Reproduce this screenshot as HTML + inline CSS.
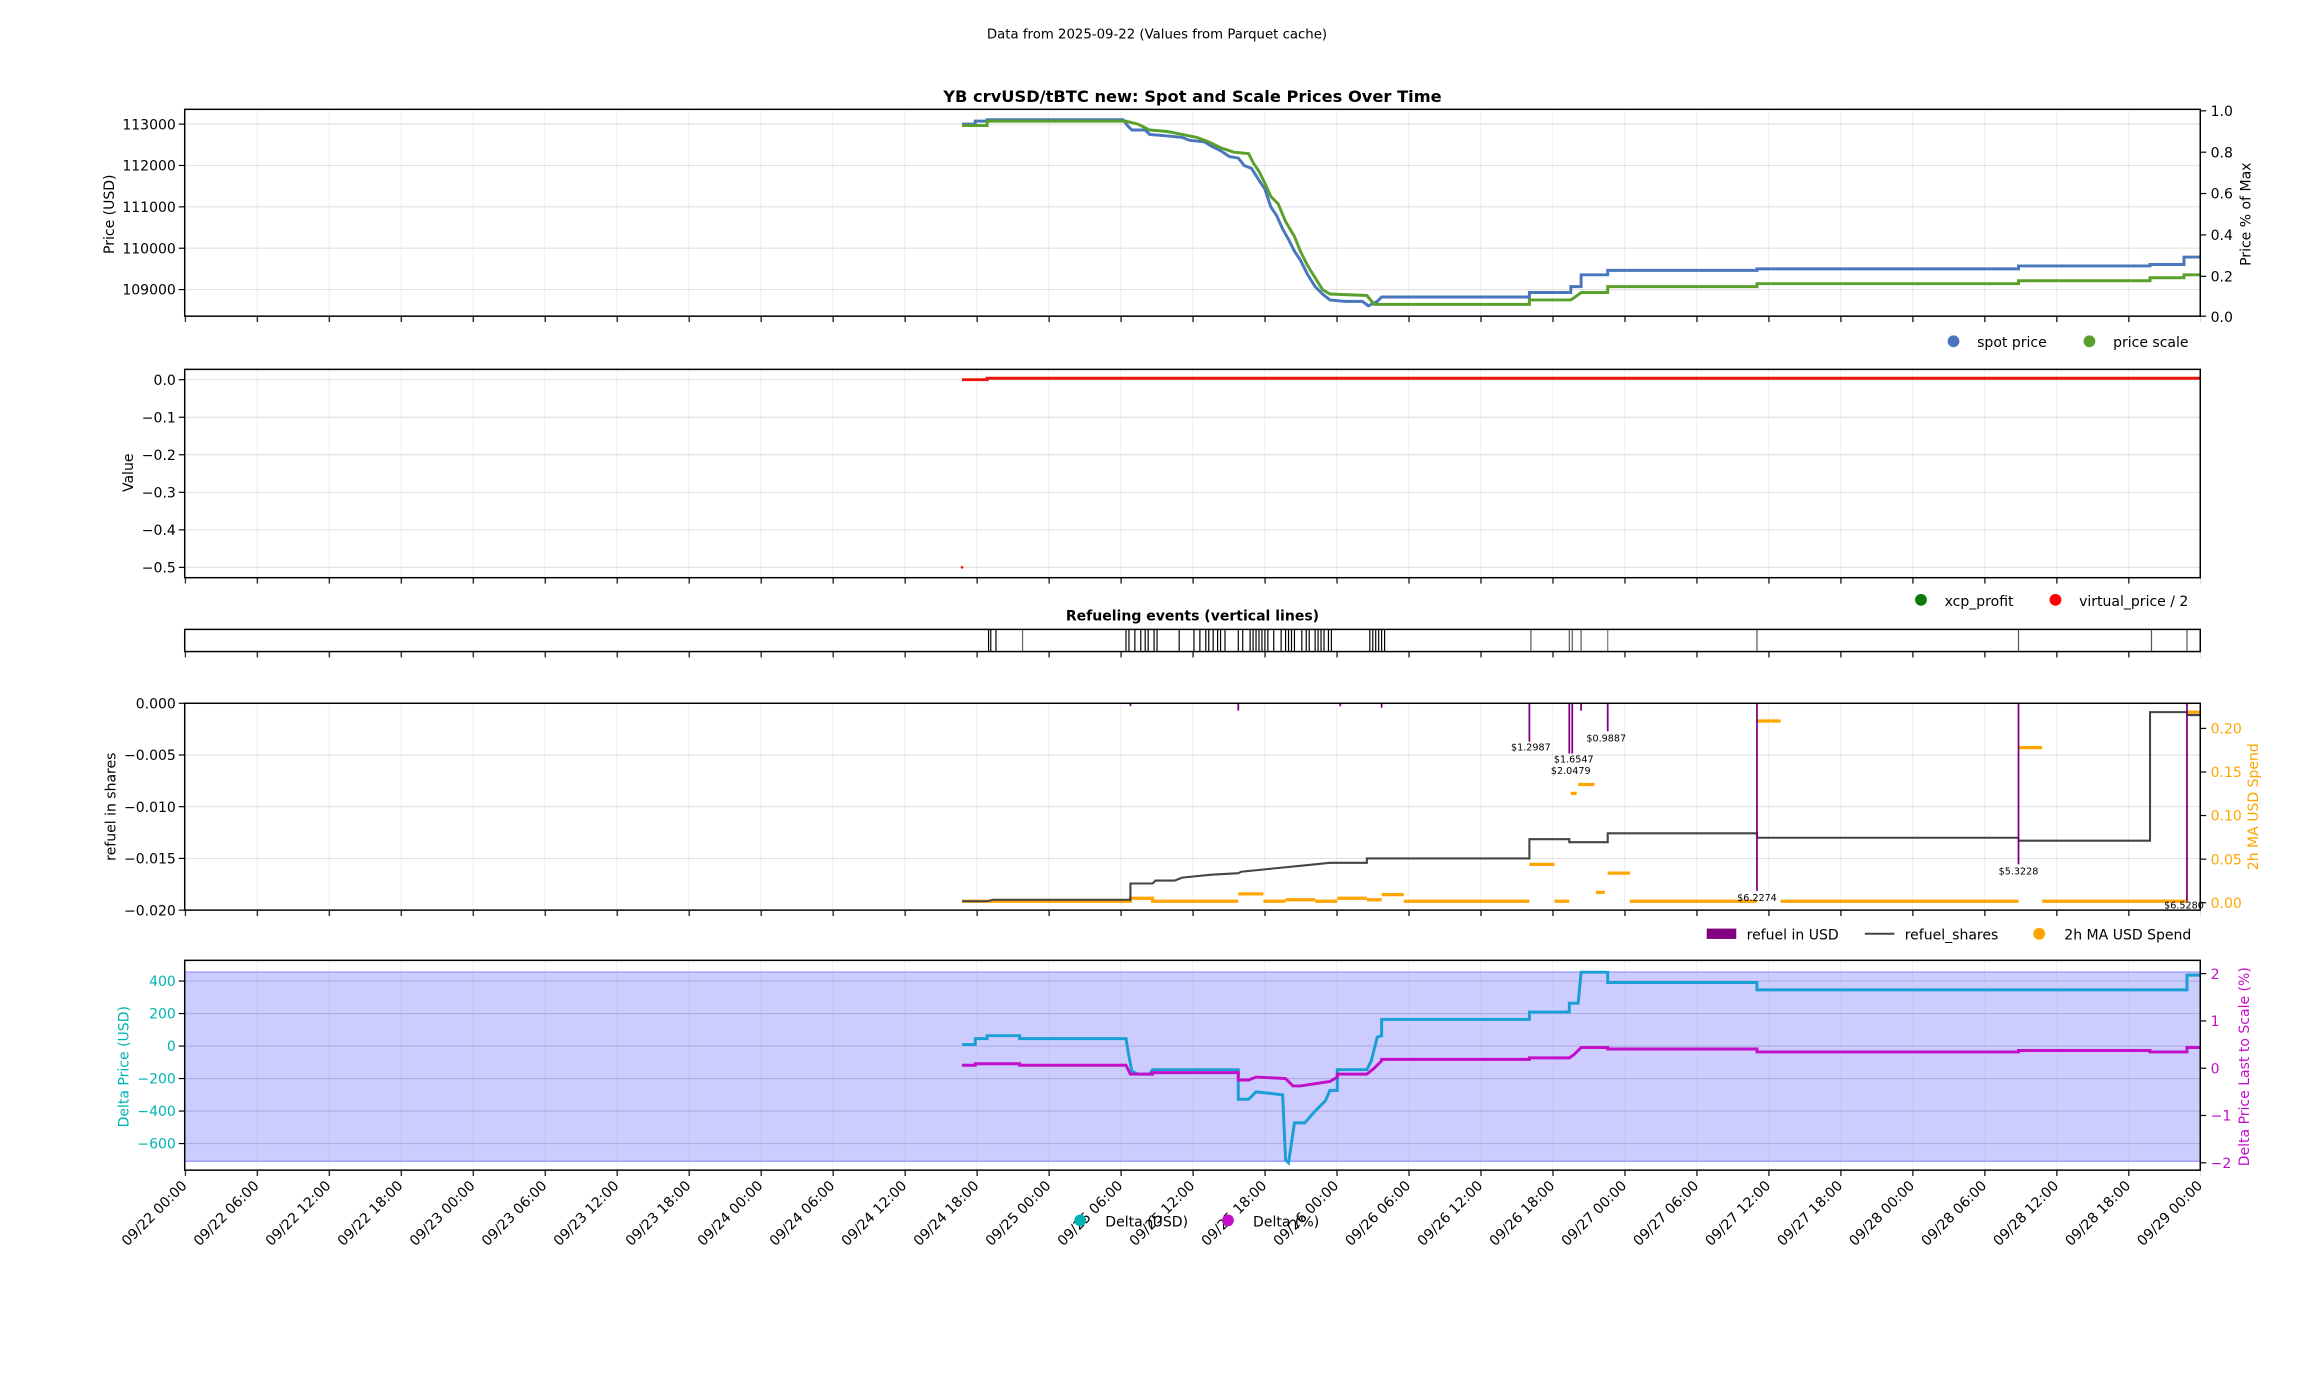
<!DOCTYPE html>
<html><head><meta charset="utf-8"><style>
html,body{margin:0;padding:0;background:#fff;}
svg{display:block;}
text{font-family:"DejaVu Sans","Liberation Sans",sans-serif;}
</style></head><body>
<svg width="2317" height="1377" viewBox="0 0 1568 932" preserveAspectRatio="none" xmlns="http://www.w3.org/2000/svg">
<defs>
<pattern id="vg" x="125" y="0" width="48.714" height="10" patternUnits="userSpaceOnUse"><line x1="0" y1="0" x2="0" y2="10" stroke="#b0b0b0" stroke-opacity="0.35" stroke-width="0.8"/></pattern>
<pattern id="tk" x="125" y="0" width="48.714" height="10" patternUnits="userSpaceOnUse"><line x1="0.4" y1="0" x2="0.4" y2="10" stroke="#000" stroke-width="0.8"/></pattern>
</defs>
<rect width="1568" height="932" fill="#fff"/>
<text x="783" y="26" font-size="9" text-anchor="middle">Data from 2025-09-22 (Values from Parquet cache)</text>
<text x="807" y="69" font-size="11" font-weight="bold" text-anchor="middle">YB crvUSD/tBTC new: Spot and Scale Prices Over Time</text>

<!-- AX1 -->
<rect x="125" y="74" width="1364" height="140" fill="url(#vg)"/>
<g stroke="#b0b0b0" stroke-opacity="0.35" stroke-width="0.8">
<line x1="125" x2="1489" y1="84" y2="84"/><line x1="125" x2="1489" y1="112" y2="112"/><line x1="125" x2="1489" y1="140" y2="140"/><line x1="125" x2="1489" y1="168" y2="168"/><line x1="125" x2="1489" y1="196" y2="196"/>
</g>
<polyline fill="none" stroke="#4a76bd" stroke-width="2" points="651,84 660,84 660,82 668,82 668,81 760,81 763,85 766,88 775,88 778,91 790,92 800,93 805,95 815,96 820,99 826,102 832,106 838,107 842,112 847,114 852,122 856,128 860,140 864,146 868,155 872,162 876,170 880,176 885,186 890,194 895,199 900,203 910,204 922,204 926,207 932,204 935,201 1035,201 1035,198 1063,198 1063,194 1070,194 1070,186 1088,186 1088,183 1189,183 1189,182 1366,182 1366,180 1455,180 1455,179 1478,179 1478,174 1489,174"/>
<polyline fill="none" stroke="#5aa02c" stroke-width="2" points="651,85 668,85 668,82 762,82 770,84 778,88 790,89 800,91 810,93 818,96 826,100 835,103 845,104 848,110 852,116 856,124 860,133 865,138 870,150 876,160 880,170 885,180 890,188 895,196 900,199 925,200 930,206 1035,206 1035,203 1063,203 1066,201 1070,198 1088,198 1088,194 1189,194 1189,192 1366,192 1366,190 1455,190 1455,188 1478,188 1478,186 1489,186"/>
<rect x="125" y="74" width="1364" height="140" fill="none" stroke="#000" stroke-width="1"/>
<rect x="125" y="214" width="1364" height="4" fill="url(#tk)"/>
<g font-size="9.5" text-anchor="end">
<text x="119" y="87.5">113000</text><text x="119" y="115.5">112000</text><text x="119" y="143.5">111000</text><text x="119" y="171.5">110000</text><text x="119" y="199.5">109000</text>
</g>
<g stroke="#000" stroke-width="0.8"><line x1="121" x2="125" y1="84" y2="84"/><line x1="121" x2="125" y1="112" y2="112"/><line x1="121" x2="125" y1="140" y2="140"/><line x1="121" x2="125" y1="168" y2="168"/><line x1="121" x2="125" y1="196" y2="196"/>
<line x1="1489" x2="1493" y1="75" y2="75"/><line x1="1489" x2="1493" y1="103" y2="103"/><line x1="1489" x2="1493" y1="131" y2="131"/><line x1="1489" x2="1493" y1="159" y2="159"/><line x1="1489" x2="1493" y1="187" y2="187"/><line x1="1489" x2="1493" y1="214" y2="214"/></g>
<g font-size="9.5"><text x="1496" y="78.5">1.0</text><text x="1496" y="106.5">0.8</text><text x="1496" y="134.5">0.6</text><text x="1496" y="162.5">0.4</text><text x="1496" y="190.5">0.2</text><text x="1496" y="218">0.0</text></g>
<text transform="translate(77,145) rotate(-90)" font-size="9.5" text-anchor="middle">Price (USD)</text>
<text transform="translate(1523,145) rotate(-90)" font-size="9.5" text-anchor="middle">Price % of Max</text>
<circle cx="1322" cy="231" r="4" fill="#4a76bd"/><text x="1338" y="235" font-size="9.5">spot price</text>
<circle cx="1414" cy="231" r="4" fill="#5aa02c"/><text x="1430" y="235" font-size="9.5">price scale</text>

<!-- AX2 -->
<rect x="125" y="250" width="1364" height="141" fill="url(#vg)"/>
<g stroke="#b0b0b0" stroke-opacity="0.35" stroke-width="0.8">
<line x1="125" x2="1489" y1="257" y2="257"/><line x1="125" x2="1489" y1="282.4" y2="282.4"/><line x1="125" x2="1489" y1="307.8" y2="307.8"/><line x1="125" x2="1489" y1="333.2" y2="333.2"/><line x1="125" x2="1489" y1="358.6" y2="358.6"/><line x1="125" x2="1489" y1="384" y2="384"/>
</g>
<polyline fill="none" stroke="#e8170c" stroke-width="2" points="651,257 668,257 668,256 1489,256"/>
<circle cx="651" cy="384" r="0.9" fill="#e8170c"/>
<rect x="125" y="250" width="1364" height="141" fill="none" stroke="#000" stroke-width="1"/>
<rect x="125" y="391" width="1364" height="4" fill="url(#tk)"/>
<g stroke="#000" stroke-width="0.8"><line x1="121" x2="125" y1="257" y2="257"/><line x1="121" x2="125" y1="282.4" y2="282.4"/><line x1="121" x2="125" y1="307.8" y2="307.8"/><line x1="121" x2="125" y1="333.2" y2="333.2"/><line x1="121" x2="125" y1="358.6" y2="358.6"/><line x1="121" x2="125" y1="384" y2="384"/></g>
<g font-size="9.5" text-anchor="end"><text x="119" y="260.5">0.0</text><text x="119" y="286">−0.1</text><text x="119" y="311.3">−0.2</text><text x="119" y="336.7">−0.3</text><text x="119" y="362">−0.4</text><text x="119" y="387.5">−0.5</text></g>
<text transform="translate(90,320) rotate(-90)" font-size="9.5" text-anchor="middle">Value</text>
<circle cx="1300" cy="406" r="4" fill="#0a7a0a"/><text x="1316" y="410" font-size="9.5">xcp_profit</text>
<circle cx="1391" cy="406" r="4" fill="#ff0000"/><text x="1407" y="410" font-size="9.5">virtual_price / 2</text>

<!-- AX3 refuel bar -->
<text x="807" y="420" font-size="9.5" font-weight="bold" text-anchor="middle">Refueling events (vertical lines)</text>
<g stroke="#000" stroke-width="0.8">
<line x1="669" x2="669" y1="426" y2="441"/><line x1="670.5" x2="670.5" y1="426" y2="441"/><line x1="674" x2="674" y1="426" y2="441"/><line x1="692" x2="692" y1="426" y2="441" stroke="#666"/>
<line x1="762" x2="762" y1="426" y2="441"/><line x1="764" x2="764" y1="426" y2="441"/><line x1="768" x2="768" y1="426" y2="441"/><line x1="772" x2="772" y1="426" y2="441"/><line x1="775" x2="775" y1="426" y2="441"/><line x1="777" x2="777" y1="426" y2="441"/><line x1="781" x2="781" y1="426" y2="441"/><line x1="783" x2="783" y1="426" y2="441"/>
<line x1="798" x2="798" y1="426" y2="441"/><line x1="808" x2="808" y1="426" y2="441"/><line x1="812" x2="812" y1="426" y2="441"/><line x1="816" x2="816" y1="426" y2="441"/><line x1="818" x2="818" y1="426" y2="441"/><line x1="821" x2="821" y1="426" y2="441"/><line x1="824" x2="824" y1="426" y2="441"/><line x1="826" x2="826" y1="426" y2="441"/><line x1="829" x2="829" y1="426" y2="441"/>
<line x1="838" x2="838" y1="426" y2="441"/><line x1="841" x2="841" y1="426" y2="441"/><line x1="846" x2="846" y1="426" y2="441"/><line x1="848" x2="848" y1="426" y2="441"/><line x1="850" x2="850" y1="426" y2="441"/><line x1="852" x2="852" y1="426" y2="441"/><line x1="854" x2="854" y1="426" y2="441"/><line x1="856" x2="856" y1="426" y2="441"/><line x1="858" x2="858" y1="426" y2="441"/><line x1="862" x2="862" y1="426" y2="441"/><line x1="867" x2="867" y1="426" y2="441"/><line x1="870" x2="870" y1="426" y2="441"/><line x1="872" x2="872" y1="426" y2="441"/><line x1="874" x2="874" y1="426" y2="441"/><line x1="876" x2="876" y1="426" y2="441"/><line x1="881" x2="881" y1="426" y2="441"/><line x1="884" x2="884" y1="426" y2="441"/><line x1="886" x2="886" y1="426" y2="441"/><line x1="890" x2="890" y1="426" y2="441"/><line x1="892" x2="892" y1="426" y2="441"/><line x1="894" x2="894" y1="426" y2="441"/><line x1="896" x2="896" y1="426" y2="441"/><line x1="899" x2="899" y1="426" y2="441"/><line x1="901" x2="901" y1="426" y2="441"/>
<line x1="927" x2="927" y1="426" y2="441"/><line x1="929" x2="929" y1="426" y2="441"/><line x1="931" x2="931" y1="426" y2="441"/><line x1="933" x2="933" y1="426" y2="441"/><line x1="935" x2="935" y1="426" y2="441"/><line x1="937" x2="937" y1="426" y2="441"/>
<line x1="1036" x2="1036" y1="426" y2="441" stroke="#555"/><line x1="1062" x2="1062" y1="426" y2="441" stroke="#555"/><line x1="1064" x2="1064" y1="426" y2="441" stroke="#555"/><line x1="1070" x2="1070" y1="426" y2="441" stroke="#555"/><line x1="1088" x2="1088" y1="426" y2="441" stroke="#777"/>
<line x1="1189" x2="1189" y1="426" y2="441" stroke="#555"/><line x1="1366" x2="1366" y1="426" y2="441" stroke="#555"/><line x1="1456" x2="1456" y1="426" y2="441" stroke="#555"/><line x1="1480" x2="1480" y1="426" y2="441" stroke="#555"/>
</g>
<rect x="125" y="426" width="1364" height="15" fill="none" stroke="#000" stroke-width="1"/>
<rect x="125" y="441" width="1364" height="4" fill="url(#tk)"/>

<!-- AX4 -->
<rect x="125" y="476" width="1364" height="140" fill="url(#vg)"/>
<g stroke="#b0b0b0" stroke-opacity="0.35" stroke-width="0.8">
<line x1="125" x2="1489" y1="511" y2="511"/><line x1="125" x2="1489" y1="546" y2="546"/><line x1="125" x2="1489" y1="581" y2="581"/>
</g>
<polyline fill="none" stroke="#ffa500" stroke-width="2.2" points="651,610 765,610 765,608 780,608 780,610 838,610"/>
<g stroke="#ffa500" stroke-width="2.2">
<line x1="838" x2="855" y1="605" y2="605"/><line x1="855" x2="870" y1="610" y2="610"/><line x1="870" x2="890" y1="609" y2="609"/><line x1="890" x2="905" y1="610" y2="610"/><line x1="905" x2="925" y1="608" y2="608"/><line x1="925" x2="935" y1="609" y2="609"/><line x1="935" x2="950" y1="605.5" y2="605.5"/><line x1="950" x2="1035" y1="610" y2="610"/>
<line x1="1035" x2="1052" y1="585" y2="585"/><line x1="1052" x2="1062" y1="610" y2="610"/><line x1="1063" x2="1067" y1="537" y2="537"/><line x1="1068" x2="1079" y1="531" y2="531"/><line x1="1080" x2="1086" y1="604" y2="604"/><line x1="1088" x2="1103" y1="591" y2="591"/><line x1="1103" x2="1189" y1="610" y2="610"/>
<line x1="1189" x2="1205" y1="488" y2="488"/><line x1="1205" x2="1366" y1="610" y2="610"/><line x1="1366" x2="1382" y1="506" y2="506"/><line x1="1382" x2="1480" y1="610" y2="610"/><line x1="1480" x2="1489" y1="482" y2="482"/>
</g>
<polyline fill="none" stroke="#444" stroke-width="1.4" points="651,610 668,610 672,609 765,609 765,598 780,598 782,596 795,596 800,594 810,593 820,592 838,591 840,590 850,589 860,588 870,587 880,586 890,585 900,584 925,584 925,581 1035,581 1035,568 1062,568 1062,570 1088,570 1088,564 1189,564 1189,567 1366,567 1366,569 1455,569 1455,482 1480,482 1480,484 1489,484"/>
<g stroke="#800080" stroke-width="1.2">
<line x1="765" x2="765" y1="476" y2="478"/><line x1="838" x2="838" y1="476" y2="481"/><line x1="907" x2="907" y1="476" y2="478"/><line x1="935" x2="935" y1="476" y2="479"/>
<line x1="1035" x2="1035" y1="476" y2="502"/><line x1="1062" x2="1062" y1="476" y2="510"/><line x1="1064" x2="1064" y1="476" y2="510"/><line x1="1070" x2="1070" y1="476" y2="481"/><line x1="1088" x2="1088" y1="476" y2="495"/><line x1="1189" x2="1189" y1="476" y2="603"/><line x1="1366" x2="1366" y1="476" y2="585"/><line x1="1480" x2="1480" y1="476" y2="610"/>
</g>
<g font-size="6.5" text-anchor="middle"><text x="1036" y="508">$1.2987</text><text x="1065" y="516">$1.6547</text><text x="1063" y="524">$2.0479</text><text x="1087" y="502">$0.9887</text><text x="1189" y="610">$6.2274</text><text x="1366" y="592">$5.3228</text><text x="1478" y="615">$6.5280</text></g>
<rect x="125" y="476" width="1364" height="140" fill="none" stroke="#000" stroke-width="1"/>
<rect x="125" y="616" width="1364" height="4" fill="url(#tk)"/>
<g stroke="#000" stroke-width="0.8"><line x1="121" x2="125" y1="476" y2="476"/><line x1="121" x2="125" y1="511" y2="511"/><line x1="121" x2="125" y1="546" y2="546"/><line x1="121" x2="125" y1="581" y2="581"/><line x1="121" x2="125" y1="616" y2="616"/>
<line x1="1489" x2="1493" y1="493" y2="493"/><line x1="1489" x2="1493" y1="522.5" y2="522.5"/><line x1="1489" x2="1493" y1="552" y2="552"/><line x1="1489" x2="1493" y1="581.5" y2="581.5"/><line x1="1489" x2="1493" y1="611" y2="611"/></g>
<g font-size="9.5" text-anchor="end"><text x="119" y="479.5">0.000</text><text x="119" y="514.5">−0.005</text><text x="119" y="549.5">−0.010</text><text x="119" y="584.5">−0.015</text><text x="119" y="619.5">−0.020</text></g>
<g font-size="9.5" fill="#ffa500"><text x="1496" y="496.5">0.20</text><text x="1496" y="526">0.15</text><text x="1496" y="555.5">0.10</text><text x="1496" y="585">0.05</text><text x="1496" y="614.5">0.00</text></g>
<text transform="translate(78,546) rotate(-90)" font-size="9.5" text-anchor="middle">refuel in shares</text>
<text transform="translate(1528,546) rotate(-90)" font-size="9.5" fill="#ffa500" text-anchor="middle">2h MA USD Spend</text>
<rect x="1155" y="628.5" width="20" height="7" fill="#800080"/><text x="1182" y="636" font-size="9.5">refuel in USD</text>
<line x1="1262" x2="1282" y1="632" y2="632" stroke="#444" stroke-width="1.4"/><text x="1289" y="636" font-size="9.5">refuel_shares</text>
<circle cx="1380" cy="632" r="4" fill="#ffa500"/><text x="1397" y="636" font-size="9.5">2h MA USD Spend</text>

<!-- AX5 -->
<rect x="125" y="658" width="1364" height="128" fill="#ccccff"/>
<rect x="125" y="650" width="1364" height="142" fill="url(#vg)"/>
<g stroke="#9090c0" stroke-opacity="0.5" stroke-width="0.8">
<line x1="125" x2="1489" y1="664" y2="664"/><line x1="125" x2="1489" y1="686" y2="686"/><line x1="125" x2="1489" y1="708" y2="708"/><line x1="125" x2="1489" y1="730" y2="730"/><line x1="125" x2="1489" y1="752" y2="752"/><line x1="125" x2="1489" y1="774" y2="774"/>
</g>
<line x1="125" x2="1489" y1="658" y2="658" stroke="#a0a0ff" stroke-width="1"/><line x1="125" x2="1489" y1="786" y2="786" stroke="#a0a0ff" stroke-width="1"/>
<polyline fill="none" stroke="#1a9fd4" stroke-width="2" points="651,707 660,707 660,703 668,703 668,701 690,701 690,703 762,703 764,715 766,725 770,727 778,727 780,724 838,724 838,744 845,744 850,739 868,741 870,785 872,787 876,760 883,760 890,752 897,745 900,738 905,738 905,724 925,724 928,718 932,702 935,701 935,690 1035,690 1035,685 1062,685 1062,679 1068,679 1070,658 1088,658 1088,665 1189,665 1189,670 1480,670 1480,660 1489,660"/>
<polyline fill="none" stroke="#c20fc8" stroke-width="2" points="651,721 660,721 660,720 690,720 690,721 762,721 765,727 780,727 780,726 838,726 838,731 845,731 850,729 870,730 875,735 880,735 900,732 905,729 905,727 925,727 930,723 935,718 935,717 1035,717 1035,716 1062,716 1065,714 1070,709 1088,709 1088,710 1189,710 1189,712 1366,712 1366,711 1455,711 1455,712 1480,712 1480,709 1489,709"/>
<rect x="125" y="650" width="1364" height="142" fill="none" stroke="#000" stroke-width="1"/>
<rect x="125" y="792" width="1364" height="4" fill="url(#tk)"/>
<g stroke="#000" stroke-width="0.8"><line x1="121" x2="125" y1="664" y2="664"/><line x1="121" x2="125" y1="686" y2="686"/><line x1="121" x2="125" y1="708" y2="708"/><line x1="121" x2="125" y1="730" y2="730"/><line x1="121" x2="125" y1="752" y2="752"/><line x1="121" x2="125" y1="774" y2="774"/>
<line x1="1489" x2="1493" y1="659" y2="659"/><line x1="1489" x2="1493" y1="691" y2="691"/><line x1="1489" x2="1493" y1="723" y2="723"/><line x1="1489" x2="1493" y1="755" y2="755"/><line x1="1489" x2="1493" y1="787" y2="787"/></g>
<g font-size="9.5" text-anchor="end" fill="#00b3b3"><text x="119" y="667.5">400</text><text x="119" y="689.5">200</text><text x="119" y="711.5">0</text><text x="119" y="733.5">−200</text><text x="119" y="755.5">−400</text><text x="119" y="777.5">−600</text></g>
<g font-size="9.5" fill="#c20fc8"><text x="1496" y="662.5">2</text><text x="1496" y="694.5">1</text><text x="1496" y="726.5">0</text><text x="1496" y="758.5">−1</text><text x="1496" y="790.5">−2</text></g>
<text transform="translate(87,722) rotate(-90)" font-size="9.5" fill="#00b3b3" text-anchor="middle">Delta Price (USD)</text>
<text transform="translate(1522,722) rotate(-90)" font-size="9.5" fill="#c20fc8" text-anchor="middle">Delta Price Last to Scale (%)</text>

<!-- x tick labels -->
<g font-size="9.5" text-anchor="end">
<text transform="translate(127,803) rotate(-45)">09/22 00:00</text>
<text transform="translate(175.7,803) rotate(-45)">09/22 06:00</text>
<text transform="translate(224.4,803) rotate(-45)">09/22 12:00</text>
<text transform="translate(273.1,803) rotate(-45)">09/22 18:00</text>
<text transform="translate(321.9,803) rotate(-45)">09/23 00:00</text>
<text transform="translate(370.6,803) rotate(-45)">09/23 06:00</text>
<text transform="translate(419.3,803) rotate(-45)">09/23 12:00</text>
<text transform="translate(468,803) rotate(-45)">09/23 18:00</text>
<text transform="translate(516.7,803) rotate(-45)">09/24 00:00</text>
<text transform="translate(565.4,803) rotate(-45)">09/24 06:00</text>
<text transform="translate(614.1,803) rotate(-45)">09/24 12:00</text>
<text transform="translate(662.9,803) rotate(-45)">09/24 18:00</text>
<text transform="translate(711.6,803) rotate(-45)">09/25 00:00</text>
<text transform="translate(760.3,803) rotate(-45)">09/25 06:00</text>
<text transform="translate(809,803) rotate(-45)">09/25 12:00</text>
<text transform="translate(857.7,803) rotate(-45)">09/25 18:00</text>
<text transform="translate(906.4,803) rotate(-45)">09/26 00:00</text>
<text transform="translate(955.1,803) rotate(-45)">09/26 06:00</text>
<text transform="translate(1003.9,803) rotate(-45)">09/26 12:00</text>
<text transform="translate(1052.6,803) rotate(-45)">09/26 18:00</text>
<text transform="translate(1101.3,803) rotate(-45)">09/27 00:00</text>
<text transform="translate(1150,803) rotate(-45)">09/27 06:00</text>
<text transform="translate(1198.7,803) rotate(-45)">09/27 12:00</text>
<text transform="translate(1247.4,803) rotate(-45)">09/27 18:00</text>
<text transform="translate(1296.1,803) rotate(-45)">09/28 00:00</text>
<text transform="translate(1344.9,803) rotate(-45)">09/28 06:00</text>
<text transform="translate(1393.6,803) rotate(-45)">09/28 12:00</text>
<text transform="translate(1442.3,803) rotate(-45)">09/28 18:00</text>
<text transform="translate(1491,803) rotate(-45)">09/29 00:00</text>
</g>
<circle cx="731" cy="826" r="4" fill="#00b3b3"/><text x="748" y="830" font-size="9.5">Delta (USD)</text>
<circle cx="831" cy="826" r="4" fill="#c20fc8"/><text x="848" y="830" font-size="9.5">Delta (%)</text>
</svg>
</body></html>
